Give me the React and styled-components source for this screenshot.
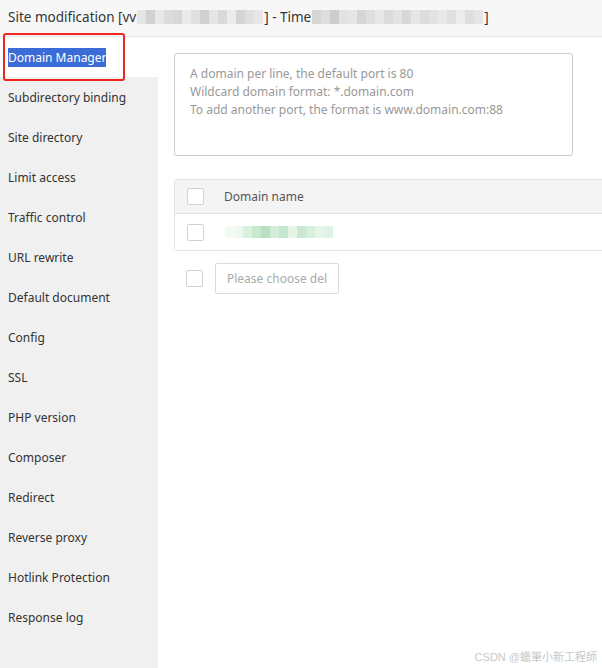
import React from "react";
import styled, { createGlobalStyle } from "styled-components";

const GlobalStyle = createGlobalStyle`
  html, body {
    margin: 0;
    padding: 0;
    background: #fff;
    overflow: hidden;
  }
  body {
    font-family: "Noto Sans", "Liberation Sans", "Noto Sans CJK TC", sans-serif;
    color: #333;
  }
`;

const Page = styled.div`
  width: 602px;
  height: 668px;
  display: flex;
  flex-direction: column;
  position: relative;
  overflow: hidden;
`;

const TitleBar = styled.div`
  height: 33px;
  padding: 0 0 3px 8px;
  flex-shrink: 0;
  background: #f7f7f7;
  border-bottom: 1px solid #e6e6e6;
  display: flex;
  align-items: center;
  font-size: 13.5px;
  color: #333;
  white-space: nowrap;
`;

const Mosaic = styled.span`
  display: inline-flex;
  height: 14px;
  vertical-align: middle;
  margin: 0 ${(p) => p.$gap || 1}px;
`;

const Tile = styled.span`
  display: inline-block;
  width: 9px;
  height: 100%;
  background: ${(p) => p.$c};
`;

const Body = styled.div`
  flex: 1;
  display: flex;
  min-height: 0;
`;

const Sidebar = styled.ul`
  list-style: none;
  margin: 0;
  padding: 0;
  width: 158px;
  flex-shrink: 0;
  background: #f0f0f0;
  position: relative;
`;

const NavItem = styled.li`
  height: 40px;
  display: flex;
  align-items: center;
  padding-left: 8px;
  font-size: 12px;
  color: #333;
  background: ${(p) => (p.$active ? "#fff" : "transparent")};
  span {
    padding: 1px 0;
    background: ${(p) => (p.$active ? "#3a6bd6" : "transparent")};
    color: ${(p) => (p.$active ? "#fff" : "#333")};
  }
`;

const Annotation = styled.div`
  position: absolute;
  left: 3px;
  top: -4px;
  width: 118px;
  height: 44px;
  border: 2px solid #f0261e;
  border-radius: 3px;
  pointer-events: none;
`;

const Content = styled.div`
  flex: 1;
  padding: 16px 0 0 16px;
  display: flex;
  flex-direction: column;
  overflow: hidden;
`;

const TextArea = styled.div`
  width: 367px;
  height: 80px;
  border: 1px solid #ccc;
  border-radius: 3px;
  padding: 11px 15px 10px;
  font-size: 12px;
  line-height: 18px;
  color: #999;
`;

const Table = styled.div`
  margin-top: 23px;
  width: 460px;
  border: 1px solid #e2e2e2;
  border-radius: 3px;
`;

const Row = styled.div`
  height: ${(p) => (p.$head ? "33px" : "36px")};
  display: flex;
  align-items: center;
  padding-left: 12px;
  gap: 20px;
  background: ${(p) => (p.$head ? "#f4f4f4" : "#fff")};
  border-bottom: ${(p) => (p.$head ? "1px solid #e2e2e2" : "none")};
  font-size: 12px;
  color: #555;
`;

const Check = styled.span`
  width: 15px;
  height: 15px;
  border: 1px solid #d2d2d2;
  border-radius: 2px;
  background: #fff;
  flex-shrink: 0;
`;

const Footer = styled.div`
  margin-top: 12px;
  display: flex;
  align-items: center;
  padding-left: 12px;
  gap: 12px;
`;

const Button = styled.div`
  height: 29px;
  padding: 0 11px;
  border: 1px solid #dcdcdc;
  border-radius: 2px;
  display: flex;
  align-items: center;
  font-size: 12px;
  color: #aaa;
`;

const Watermark = styled.div`
  position: absolute;
  right: 5px;
  bottom: 4px;
  font-size: 11px;
  color: #c8c8c8;
  font-family: "Liberation Sans", "Noto Sans CJK TC", sans-serif;
`;

const items = [
  "Domain Manager",
  "Subdirectory binding",
  "Site directory",
  "Limit access",
  "Traffic control",
  "URL rewrite",
  "Default document",
  "Config",
  "SSL",
  "PHP version",
  "Composer",
  "Redirect",
  "Reverse proxy",
  "Hotlink Protection",
  "Response log",
];

const grayA = ["#e4e4e4", "#d2d2d2", "#e8e8e8", "#dcdcdc", "#d8d8d8", "#ebebeb", "#e0e0e0", "#d0d0d0", "#e5e5e5", "#dadada", "#ececec", "#d5d5d5", "#dfdfdf", "#e7e7e7"];
const grayB = ["#d6d6d6", "#dedede", "#cdcdcd", "#e2e2e2", "#e6e6e6", "#d6d6d6", "#dfdfdf", "#e8e8e8", "#dbdbdb", "#e3e3e3", "#d8d8d8", "#e6e6e6", "#dcdcdc", "#e2e2e2", "#e9e9e9", "#e0e0e0", "#ececec", "#dedede", "#e5e5e5"];
const greens = ["#f2faf4", "#eef8f0", "#d9f0de", "#c8e8d0", "#b8e0c3", "#d2ecd8", "#c4e6cc", "#e4f4e8", "#cbe9d2", "#d8efdd", "#e6f5e9", "#dff2e3"];

function Blur({ colors, height, gap }) {
  return (
    <Mosaic $gap={gap} style={height ? { height } : undefined}>
      {colors.map((c, i) => (
        <Tile key={i} $c={c} />
      ))}
    </Mosaic>
  );
}

export default function App() {
  return (
    <Page>
      <GlobalStyle />
      <TitleBar>
        Site modification [vv<Blur colors={grayA} />] - Time
        <Blur colors={grayB} />]
      </TitleBar>
      <Body>
        <Sidebar>
          {items.map((t, i) => (
            <NavItem key={t} $active={i === 0}>
              <span>{t}</span>
            </NavItem>
          ))}
          <Annotation />
        </Sidebar>
        <Content>
          <TextArea>
            A domain per line, the default port is 80
            <br />
            Wildcard domain format: *.domain.com
            <br />
            To add another port, the format is www.domain.com:88
          </TextArea>
          <Table>
            <Row $head>
              <Check />
              Domain name
            </Row>
            <Row>
              <Check />
              <Blur colors={greens} height={12} gap={1} />
            </Row>
          </Table>
          <Footer>
            <Check />
            <Button>Please choose del</Button>
          </Footer>
        </Content>
      </Body>
      <Watermark>CSDN @蠟筆小新工程師</Watermark>
    </Page>
  );
}
